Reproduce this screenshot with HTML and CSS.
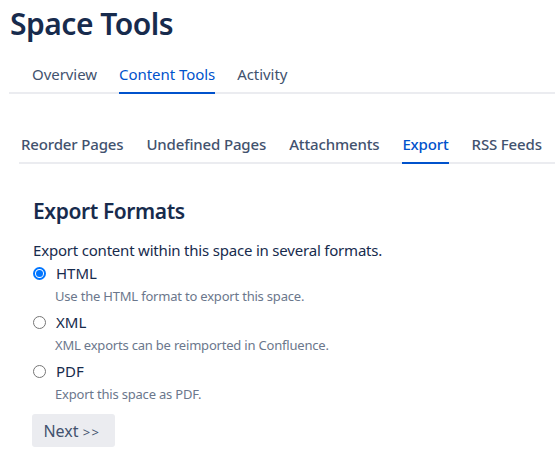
FILE: index.html
```html
<!DOCTYPE html>
<html>
<head>
<meta charset="utf-8">
<link rel="stylesheet" href="styles.css">
</head>
<body>
<div class="page">
  <h1 class="title">Space Tools</h1>
  <nav class="tabs main-tabs">
    <a class="tab">Overview</a>
    <a class="tab active">Content Tools</a>
    <a class="tab">Activity</a>
  </nav>
  <nav class="tabs sub-tabs">
    <a class="tab">Reorder Pages</a>
    <a class="tab">Undefined Pages</a>
    <a class="tab">Attachments</a>
    <a class="tab active">Export</a>
    <a class="tab">RSS Feeds</a>
  </nav>
  <section class="content">
    <h2 class="heading">Export Formats</h2>
    <p class="intro">Export content within this space in several formats.</p>
    <div class="option">
      <label class="option-label"><span class="radio checked"></span>HTML</label>
      <div class="desc">Use the HTML format to export this space.</div>
    </div>
    <div class="option">
      <label class="option-label"><span class="radio"></span>XML</label>
      <div class="desc">XML exports can be reimported in Confluence.</div>
    </div>
    <div class="option">
      <label class="option-label"><span class="radio"></span>PDF</label>
      <div class="desc">Export this space as PDF.</div>
    </div>
    <button class="btn">Next <span class="arrows">&gt;&gt;</span></button>
  </section>
</div>
</body>
</html>
```

FILE: styles.css
```css
* { box-sizing: border-box; }
html, body { margin: 0; padding: 0; background: #fff; }
body {
  font-family: "Noto Sans", "Open Sans", sans-serif;
  color: #172b4d;
  overflow: hidden;
}
.page { padding: 0 0 0 9px; }
.title {
  margin: 0;
  padding: 2px 0 0 1px;
  font-size: 30px;
  font-weight: 600;
  line-height: 44px;
  color: #172b4d;
  letter-spacing: -0.5px;
}
.tabs {
  display: flex;
  gap: 22px;
  border-bottom: 2px solid #ebecf0;
}
.tab {
  color: #42526e;
  font-size: 15px;
  line-height: 20px;
  padding: 9px 0 8px;
  margin-bottom: -2px;
  border-bottom: 2px solid transparent;
  white-space: nowrap;
}
.tab.active { color: #0052cc; border-bottom-color: #0052cc; }
.main-tabs { padding-left: 23px; margin-top: 9px; }
.main-tabs .tab { font-size: 15px; letter-spacing: -0.05px; }
.sub-tabs {
  margin: 31px 0 0 10px;
  padding-left: 2px;
  gap: 23px;
}
.sub-tabs .tab { font-weight: 500; letter-spacing: -0.15px; }
.content { padding: 33px 0 0 24px; }
.heading {
  margin: 0;
  font-size: 21px;
  font-weight: 600;
  line-height: 28px;
  letter-spacing: -0.4px;
}
.intro {
  margin: 14px 0 0;
  font-size: 15px;
  line-height: 22px;
  letter-spacing: -0.2px;
}
.option { margin-top: 4px; }
.option:first-of-type { margin-top: 1px; }
.option-label {
  display: flex;
  align-items: center;
  gap: 10px;
  font-size: 15px;
  font-weight: 400;
  line-height: 22px;
}
.radio {
  width: 13px;
  height: 13px;
  border-radius: 50%;
  border: 1px solid #767676;
  display: inline-block;
  flex: none;
  position: relative;
}
.radio.checked { border: 2px solid #0075ff; }
.radio.checked::after {
  content: "";
  position: absolute;
  left: 1px; top: 1px;
  width: 7px; height: 7px;
  border-radius: 50%;
  background: #0075ff;
}
.desc {
  padding-left: 22px;
  margin-top: 1px;
  font-size: 13px;
  line-height: 22px;
  color: #6b778c;
  letter-spacing: -0.2px;
}
.btn {
  margin-top: 9px;
  background: #ebecf0;
  border: none;
  border-radius: 3px;
  height: 33px;
  width: 83px;
  padding: 0 3px 0 0;
  font-family: inherit;
  font-size: 16px;
  color: #42526e;
  margin-left: -1px;
}
.arrows { font-size: 13px; letter-spacing: 1.5px; }
```
